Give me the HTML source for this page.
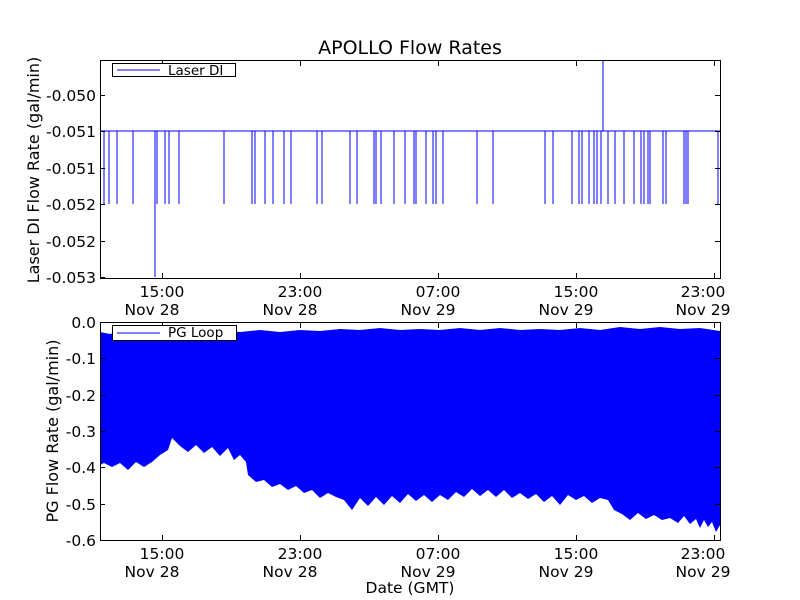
<!DOCTYPE html>
<html><head><meta charset="utf-8"><style>body{margin:0;background:#fff}svg{display:block}text{font-family:"DejaVu Sans","Liberation Sans",sans-serif;fill:#000}</style></head><body>
<svg width="800" height="600" viewBox="0 0 800 600" xmlns="http://www.w3.org/2000/svg">
<rect width="800" height="600" fill="#fff"/>
<text x="410" y="54" font-size="19" text-anchor="middle">APOLLO Flow Rates</text>
<g stroke="#0000ff" stroke-width="1.2" fill="none" shape-rendering="crispEdges">
<line x1="100" y1="131" x2="720" y2="131"/>
<path d="M104 131V204M109 131V204M117 131V204M133 131V204M155 131V277M157 131V204M165 131V204M169 131V204M179 131V204M224 131V204M252 131V204M255 131V204M265 131V204M273 131V204M284 131V204M291 131V204M317 131V204M322 131V204M350 131V204M357 131V204M374 131V204M376 131V204M381 131V204M394 131V204M405 131V204M414 131V204M416 131V204M426 131V204M433 131V204M436 131V204M443 131V204M477 131V204M493 131V204M545 131V204M553 131V204M572 131V204M579 131V204M582 131V204M589 131V204M594 131V204M597 131V204M601 131V204M603 131V60M608 131V204M615 131V204M624 131V204M634 131V204M641 131V204M644 131V204M648 131V204M650 131V204M663 131V204M666 131V204M684 131V204M686 131V204M688 131V204M718 131V204"/>
</g>
<rect x="100.5" y="60.5" width="620" height="218" fill="none" stroke="#000"/>
<g stroke="#000">
<path d="M100 95.5h5M100 131.5h5M100 168.5h5M100 204.5h5M100 241.5h5M100 277.5h5M720 95.5h-5M720 131.5h-5M720 168.5h-5M720 204.5h-5M720 241.5h-5M162.5 278v-5M300.5 278v-5M438.5 278v-5M576.5 278v-5M714.5 278v-5M162.5 61v5M300.5 61v5M438.5 61v5M576.5 61v5M714.5 61v5"/>
</g>
<g font-size="15.5" text-anchor="end">
<text x="96" y="101">-0.050</text><text x="96" y="137">-0.051</text><text x="96" y="174">-0.051</text><text x="96" y="210">-0.052</text><text x="96" y="247">-0.052</text><text x="96" y="283">-0.053</text>
</g>
<g font-size="15.5" text-anchor="middle">
<text x="162" y="297">15:00</text><text x="300" y="297">23:00</text><text x="438" y="297">07:00</text><text x="576" y="297">15:00</text><text x="703" y="297">23:00</text>
<text x="152" y="315">Nov 28</text><text x="290" y="315">Nov 28</text><text x="428" y="315">Nov 29</text><text x="566" y="315">Nov 29</text><text x="703" y="315">Nov 29</text>
</g>
<text transform="translate(39,170) rotate(-90)" font-size="16" text-anchor="middle">Laser DI Flow Rate (gal/min)</text>
<rect x="112.5" y="63.5" width="123" height="13" fill="#fff" stroke="#000"/>
<line x1="117" y1="70" x2="160" y2="70" stroke="#00f"/>
<text x="168" y="75" font-size="13.5">Laser DI</text>
<polygon fill="#00f" points="100,332 110,334 120,331 130,333 140,330 150,332 160,331 170,333 180,330 190,332 200,331 210,333 220,330 240,332 260,330 280,332 300,330 320,331 340,329 360,330 380,328 400,330 420,329 440,330 460,328 480,330 500,328 520,330 540,329 560,330 580,328 600,330 620,327 640,329 660,327 680,329 700,328 720,331 720,525 716,532 712,522 708,527 704,520 700,528 696,519 690,524 684,516 678,523 670,518 662,520 654,515 646,519 638,513 630,520 622,514 614,510 608,500 600,498 592,503 584,496 576,500 568,495 560,505 552,496 544,502 536,494 528,499 520,493 512,498 504,490 496,497 488,490 480,496 472,489 464,497 456,492 448,500 440,495 432,502 424,495 416,501 408,494 400,503 392,496 384,505 376,497 368,506 360,498 352,510 344,500 336,497 328,493 320,498 312,490 304,493 296,486 288,490 280,484 272,487 264,480 256,482 248,475 246,462 240,455 234,460 228,448 220,456 212,447 204,453 196,445 188,452 180,446 172,438 168,450 160,455 152,462 144,467 136,462 128,470 120,463 112,467 104,463 100,465"/>
<rect x="100.5" y="322.5" width="620" height="218" fill="none" stroke="#000"/>
<g stroke="#000">
<path d="M100 358.5h5M100 395.5h5M100 431.5h5M100 467.5h5M100 504.5h5M720 358.5h-5M720 395.5h-5M720 431.5h-5M720 467.5h-5M720 504.5h-5M162.5 540v-5M300.5 540v-5M438.5 540v-5M576.5 540v-5M714.5 540v-5M162.5 323v5M300.5 323v5M438.5 323v5M576.5 323v5M714.5 323v5"/>
</g>
<g font-size="15.5" text-anchor="end">
<text x="96" y="328">0.0</text><text x="96" y="364">-0.1</text><text x="96" y="401">-0.2</text><text x="96" y="437">-0.3</text><text x="96" y="473">-0.4</text><text x="96" y="510">-0.5</text><text x="96" y="546">-0.6</text>
</g>
<g font-size="15.5" text-anchor="middle">
<text x="162" y="559">15:00</text><text x="300" y="559">23:00</text><text x="438" y="559">07:00</text><text x="576" y="559">15:00</text><text x="703" y="559">23:00</text>
<text x="152" y="577">Nov 28</text><text x="290" y="577">Nov 28</text><text x="428" y="577">Nov 29</text><text x="566" y="577">Nov 29</text><text x="703" y="577">Nov 29</text>
<text x="410" y="593">Date (GMT)</text>
</g>
<text transform="translate(58,431) rotate(-90)" font-size="16" text-anchor="middle">PG Flow Rate (gal/min)</text>
<rect x="112.5" y="325.5" width="124" height="15" fill="#fff" stroke="#000"/>
<line x1="117" y1="333" x2="160" y2="333" stroke="#00f"/>
<text x="168" y="337" font-size="13.5">PG Loop</text>
</svg>
</body></html>
